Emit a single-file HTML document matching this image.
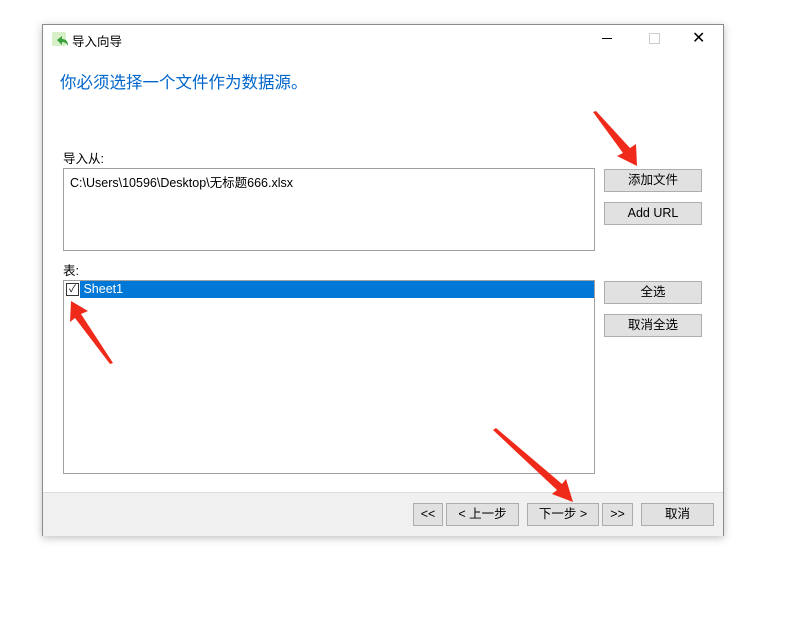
<!DOCTYPE html><html><head><meta charset="utf-8"><style>
body{margin:0;width:789px;height:620px;background:#fff;position:relative;font-family:"Liberation Sans","Noto Sans CJK SC",sans-serif;font-size:12.5px;overflow:hidden}
.a{position:absolute}
.win{left:42px;top:24px;width:680px;height:510px;border:1px solid #8a8a8a;background:#fff;box-shadow:0 2px 8px rgba(0,0,0,.25)}
.btn{position:absolute;background:#e1e1e1;border:1px solid #adadad;box-sizing:border-box;text-align:center;font-size:12.5px;color:#000}
</style></head><body>
<div class="a win"></div>
<div class="a" style="left:52px;top:32px;width:14px;height:14px;background:#d8f0c8;border-radius:2px"></div>
<svg class="a" style="left:52px;top:32px" width="18" height="18"><path d="M5 8 L10 4 L10 7 Q16 7 16 14 Q14 10 10 10 L10 13 Z" fill="#3aa13a"/></svg>
<div class="a" style="left:72px;top:31px;font-size:12.5px">导入向导</div>
<div class="a" style="left:602px;top:38px;width:10px;height:1px;background:#000"></div>
<div class="a" style="left:649px;top:33px;width:9px;height:9px;border:1px solid #ccc"></div>
<div class="a" style="left:692px;top:28px;font-size:16px">✕</div>
<div class="a" style="left:60px;top:69px;font-size:16.5px;color:#0066cc">你必须选择一个文件作为数据源。</div>
<div class="a" style="left:63px;top:148px">导入从:</div>
<div class="a" style="left:63px;top:168px;width:530px;height:81px;border:1px solid #a0a0a0"></div>
<div class="a" style="left:70px;top:172px">C:\Users\10596\Desktop\无标题666.xlsx</div>
<div class="btn" style="left:604px;top:169px;width:98px;height:23px;line-height:21px">添加文件</div>
<div class="btn" style="left:604px;top:202px;width:98px;height:23px;line-height:21px">Add URL</div>
<div class="a" style="left:63px;top:260px">表:</div>
<div class="a" style="left:63px;top:280px;width:530px;height:192px;border:1px solid #a0a0a0"></div>
<div class="a" style="left:80px;top:281px;width:514px;height:17px;background:#0078d7;color:#fff;line-height:17px">&nbsp;Sheet1</div>
<div class="a" style="left:66px;top:283px;width:11px;height:11px;border:1px solid #333;background:#fff;font-size:10px;line-height:11px;text-align:center">✓</div>
<div class="btn" style="left:604px;top:281px;width:98px;height:23px;line-height:21px">全选</div>
<div class="btn" style="left:604px;top:314px;width:98px;height:23px;line-height:21px">取消全选</div>
<div class="a" style="left:43px;top:492px;width:680px;height:43px;background:#f0f0f0;border-top:1px solid #dcdcdc"></div>
<div class="btn" style="left:413px;top:503px;width:30px;height:23px;line-height:21px">&lt;&lt;</div>
<div class="btn" style="left:446px;top:503px;width:73px;height:23px;line-height:21px">&lt; 上一步</div>
<div class="btn" style="left:527px;top:503px;width:72px;height:23px;line-height:21px">下一步 &gt;</div>
<div class="btn" style="left:602px;top:503px;width:31px;height:23px;line-height:21px">&gt;&gt;</div>
<div class="btn" style="left:641px;top:503px;width:73px;height:23px;line-height:21px">取消</div>
<svg class="a" style="left:0;top:0" width="789" height="620">
<polygon points="593,112 596,111 630,148 636,144 637,166 617,156 623,153" fill="#f02a1a"/>
<polygon points="113,363 110,364 75,318 70,322 71,301 88,311 81,314" fill="#f02a1a"/>
<polygon points="493,430 496,428 562,484 566,479 573,502 552,494 557,490" fill="#f02a1a"/>
</svg>
</body></html>
